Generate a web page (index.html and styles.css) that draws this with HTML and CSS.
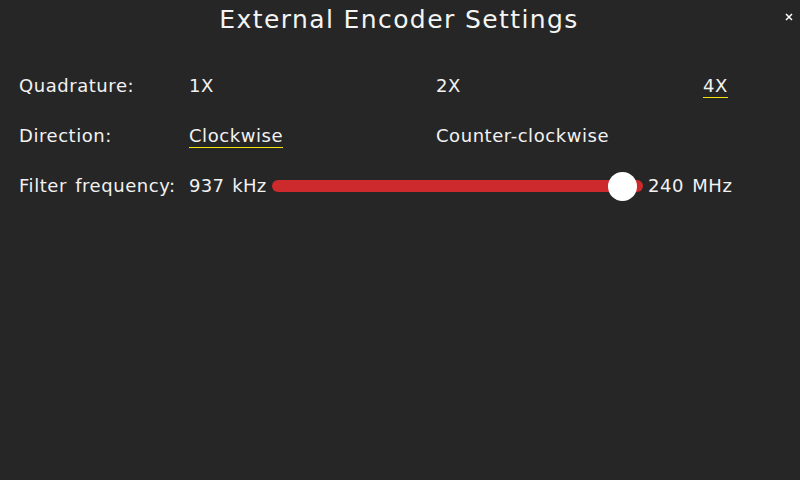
FILE: index.html
```html
<!DOCTYPE html>
<html>
<head>
<meta charset="utf-8">
<link rel="stylesheet" href="styles.css">
</head>
<body>
<div class="screen">
  <header class="title-bar">
    <h1 class="title">External Encoder Settings</h1>
    <button class="close" aria-label="Close">
      <svg width="8" height="8" viewBox="0 0 8 8"><path d="M1 1 L7 7 M7 1 L1 7" stroke="#ffffff" stroke-width="1.5"/></svg>
    </button>
  </header>
  <div class="rows">
    <div class="row grid">
      <span class="label">Quadrature:</span>
      <span class="opt">1X</span>
      <span class="opt">2X</span>
      <span class="opt"><span class="sel">4X</span></span>
    </div>
    <div class="row grid">
      <span class="label">Direction:</span>
      <span class="opt"><span class="sel">Clockwise</span></span>
      <span class="opt">Counter-clockwise</span>
    </div>
    <div class="row filter">
      <span class="label">Filter frequency:</span>
      <span class="min">937 kHz</span>
      <div class="slider">
        <div class="track"></div>
        <div class="knob"></div>
      </div>
      <span class="max">240 MHz</span>
    </div>
  </div>
</div>
</body>
</html>
```
FILE: styles.css
```css
html, body {
  margin: 0;
  padding: 0;
  background: #262626;
}
.screen {
  width: 800px;
  height: 480px;
  background: #262626;
  color: #f2f2f2;
  font-family: "DejaVu Sans", sans-serif;
  position: relative;
}
.title-bar {
  display: flex;
  justify-content: center;
  padding-top: 5px;
}
.title {
  margin: 0 0 0 -2px;
  font-size: 25px;
  font-weight: normal;
  line-height: 30px;
  letter-spacing: 1.4px;
  color: #f4f4f4;
}
.close {
  position: absolute;
  top: 13px;
  right: 7px;
  background: none;
  border: 0;
  padding: 0;
  width: 8px;
  height: 8px;
  display: flex;
}
.rows {
  padding: 39px 0 0 19px;
  display: flex;
  flex-direction: column;
  gap: 26px;
}
.row {
  font-size: 18px;
  line-height: 24px;
  height: 24px;
  letter-spacing: 0.55px;
  word-spacing: 2px;
}
.grid {
  display: grid;
  grid-template-columns: 170px 247px 267px auto;
}
.sel {
  display: inline-block;
  line-height: 22px;
  border-bottom: 1px solid #f5e50a;
}
.filter {
  display: flex;
  align-items: center;
}
.filter .label {
  width: 170px;
  flex-shrink: 0;
  white-space: nowrap;
}
.min {
  width: 83px;
  flex-shrink: 0;
  white-space: nowrap;
  letter-spacing: 0.3px;
}
.slider {
  position: relative;
  width: 371px;
  height: 12px;
  flex-shrink: 0;
}
.track {
  height: 12px;
  border-radius: 6px;
  background: #cc2a2c;
}
.knob {
  position: absolute;
  left: 336px;
  top: -8.5px;
  width: 29px;
  height: 29px;
  border-radius: 50%;
  background: #ffffff;
}
.max {
  margin-left: 5px;
  white-space: nowrap;
}
```
